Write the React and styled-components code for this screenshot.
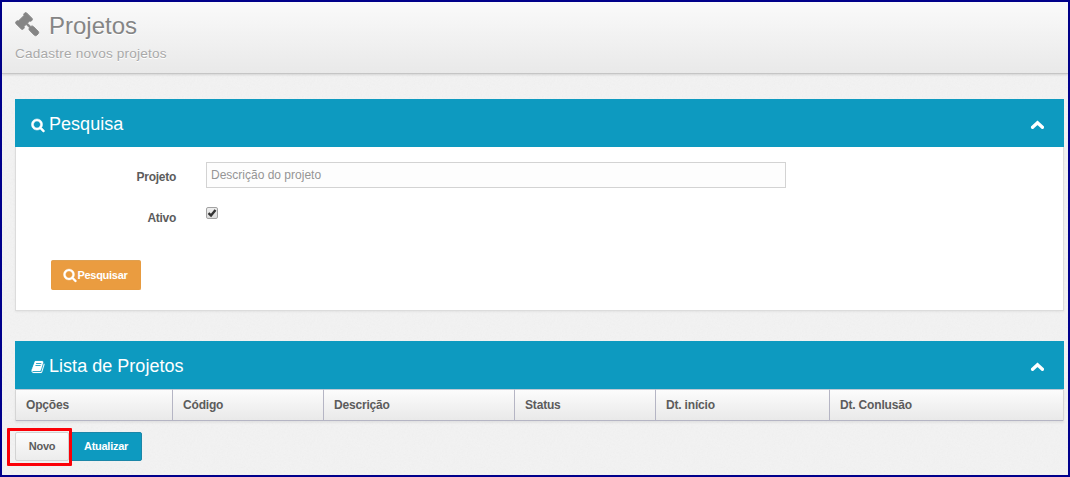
import React, { useState } from "react";
import styled, { createGlobalStyle } from "styled-components";

const GlobalStyle = createGlobalStyle`
  *,
  *::after {
    box-sizing: border-box;
  }

  body {
    margin: 0;
    overflow: hidden;
    font-family: "Liberation Sans", Arial, sans-serif;
    font-size: 12px;
    color: #5c5c5c;
  }
`;

const grain = `url("data:image/svg+xml,%3Csvg xmlns='http://www.w3.org/2000/svg' width='120' height='120'%3E%3Cfilter id='n'%3E%3CfeTurbulence type='fractalNoise' baseFrequency='.6' numOctaves='2' stitchTiles='stitch'/%3E%3CfeColorMatrix type='saturate' values='0'/%3E%3C/filter%3E%3Crect width='120' height='120' filter='url(%23n)' opacity='.08'/%3E%3C/svg%3E")`;

const Page = styled.div`
  display: flex;
  flex-direction: column;
  width: 1070px;
  height: 477px;
  border: 2px solid #00008b;
  background: #f3f3f3 ${grain};
`;

const Header = styled.header`
  height: 72px;
  flex: none;
  padding: 10px 13px 0;
  background: linear-gradient(#fafafa, #e9e9e9);
  border-bottom: 1px solid #c5c5c5;
  box-shadow: 0 1px 2px rgba(0, 0, 0, 0.12);
`;

const Title = styled.h1`
  display: flex;
  align-items: center;
  gap: 10px;
  height: 28px;
  margin: 0;
  font-size: 24px;
  font-weight: normal;
  color: #858585;
  text-shadow: 0 1px 0 #fff;

  svg {
    margin-top: -4px;
  }
`;

const Subtitle = styled.p`
  margin: 6px 0 0;
  font-size: 13.6px;
  line-height: 15px;
  letter-spacing: 0.19px;
  color: #a9a9a9;
  text-shadow: 0 1px 0 #fff;
`;

const Content = styled.main`
  display: flex;
  flex-direction: column;
  padding: 25px 4px 0 13px;
`;

const Panel = styled.section`
  margin-bottom: ${(p) => p.$gap || 0}px;
`;

const PanelHeader = styled.div`
  display: flex;
  align-items: center;
  height: 48px;
  padding: 2px 20px 0 16px;
  background: #0d9ac0;
  color: #fff;

  svg {
    margin-top: 1px;
  }

  h2 {
    flex: 1;
    margin: 0 0 0 4px;
    font-size: 18px;
    font-weight: normal;
    letter-spacing: 0.03px;
  }
`;

const Toggle = styled.button`
  display: flex;
  padding: 0;
  border: 0;
  background: none;
  color: #fff;
`;

const Form = styled.div`
  height: 164px;
  padding: 15px 35px 0;
  background: #fff;
  border: 1px solid #dcdcdc;
  border-top: 0;
  box-shadow: 0 1px 2px rgba(0, 0, 0, 0.06);
`;

const Field = styled.div`
  display: flex;
  align-items: flex-start;
  height: ${(p) => p.$height}px;

  label {
    width: 125px;
    margin-right: 30px;
    padding-top: 8px;
    line-height: 14px;
    text-align: right;
    font-weight: bold;
    letter-spacing: -0.28px;
  }
`;

const TextInput = styled.input`
  width: 580px;
  height: 26px;
  padding: 0 4px;
  border: 1px solid #d3d3d3;
  background: #fdfdfd;
  font-family: inherit;
  font-size: 12px;
  outline: none;

  &::placeholder {
    color: #959595;
  }
`;

const Check = styled.button`
  display: flex;
  align-items: center;
  justify-content: center;
  width: 12px;
  height: 12px;
  margin-top: 4px;
  padding: 0;
  border: 1px solid #a2a2a2;
  border-radius: 2px;
  background: linear-gradient(#eee, #dcdcdc);
`;

const Button = styled.button`
  display: flex;
  align-items: center;
  justify-content: center;
  width: ${(p) => p.$width}px;
  height: 30px;
  padding: 0 0 1px;
  border: 1px solid transparent;
  border-radius: 2px;
  font-family: inherit;
  font-size: 11px;
  font-weight: bold;
  letter-spacing: -0.28px;
  color: #fff;

  svg {
    margin-top: 1px;
  }
`;

const SearchButton = styled(Button)`
  padding-right: 1px;
  background: #ea9c40;
  border-color: #e79b40;
  border-top-color: #dfa051;
`;

const RefreshButton = styled(Button)`
  height: 29px;
  background: #0d9ac0;
  border-color: #1b86a8;
`;

const NewButton = styled(Button)`
  height: 29px;
  background: linear-gradient(#fcfcfc, #ececec);
  border-color: #d3d3d3;
  color: #5c5c5c;
`;

const Table = styled.table`
  width: 1049px;
  height: 32px;
  table-layout: fixed;
  border-collapse: separate;
  border-spacing: 0;
  border-right: 1px solid #d5d5d5;
  border-left: 1px solid #d5d5d5;
  box-shadow: 0 2px 2px rgba(0, 0, 0, 0.06);
`;

const Column = styled.th`
  width: ${(p) => p.$width}px;
  height: 32px;
  padding: 0 10px;
  text-align: left;
  font-size: 12px;
  line-height: 14px;
  letter-spacing: -0.18px;
  background: linear-gradient(#fcfcfc, #e9e9e9);
  border-top: 1px solid #bfc9d4;
  border-bottom: 1px solid #b5b5c4;
  border-right: 1px solid #b5b5c4;

  &:last-child {
    border-right: 0;
  }
`;

const Actions = styled.div`
  display: flex;
  margin-top: 11px;
`;

const Highlighted = styled.div`
  position: relative;
  width: 55px;

  &::after {
    content: "";
    position: absolute;
    z-index: 1;
    top: -4px;
    left: -8px;
    width: 65px;
    height: 38px;
    border: 3px solid #fb0007;
    border-radius: 1px;
    pointer-events: none;
  }
`;

const icons = {
  gavel:
    "M1771 1536q0 53-37 90l-107 108q-39 37-91 37-53 0-90-37l-363-364q-38-36-38-90 0-53 43-96l-256-256-126 126q-14 14-34 14t-34-14q2 2 12.5 12t12.5 13 10 11.5 10 13.5 6 13.5 5.5 16.5 1.5 18q0 38-28 68-3 3-16.5 18t-19 20.5-18.5 16.5-22 15.5-22 9-26 4.5q-40 0-68-28l-408-408q-28-28-28-68 0-13 4.5-26t9-22 15.5-22 16.5-18.5 20.5-19 18-16.5q30-28 68-28 10 0 18 1.5t16.5 5.5 13.5 6 13.5 10 11.5 10 13 12.5 12 12.5q-14-14-14-34t14-34l348-348q14-14 34-14t34 14q-2-2-12.5-12t-12.5-13-10-11.5-10-13.5-6-13.5-5.5-16.5-1.5-18q0-38 28-68 3-3 16.5-18t19-20.5 18.5-16.5 22-15.5 22-9 26-4.5q40 0 68 28l408 408q28 28 28 68 0 13-4.5 26t-9 22-15.5 22-16.5 18.5-20.5 19-18 16.5q-30 28-68 28-10 0-18-1.5t-16.5-5.5-13.5-6-13.5-10-11.5-10-13-12.5-12-12.5q14 14 14 34t-14 34l-126 126 256 256q43-43 96-43 52 0 91 37l363 363q37 39 37 91z",
  search:
    "M1216 832q0-185-131.5-316.5t-316.5-131.5-316.5 131.5-131.5 316.5 131.5 316.5 316.5 131.5 316.5-131.5 131.5-316.5zm512 832q0 52-38 90t-90 38q-54 0-90-38l-343-342q-179 124-399 124-143 0-273.5-55.5t-225-150-150-225-55.5-273.5 55.5-273.5 150-225 225-150 273.5-55.5 273.5 55.5 225 150 150 225 55.5 273.5q0 220-124 399l343 343q37 37 37 90z",
  book: "M1703 478q40 57 18 129l-275 906q-19 64-76.5 107.5t-122.5 43.5h-923q-77 0-148.5-53.5t-99.5-131.5q-24-67-2-127 0-4 3-27t4-37q1-8-3-21.5t-3-19.5q2-11 8-21t16.5-23.5 16.5-23.5q23-38 45-91.5t30-91.5q3-10 .5-30t-.5-28q3-11 17-28t17-23q21-36 42-92t25-90q1-9-2.5-32t.5-28q4-13 22-30.5t22-22.5q19-26 42.5-84.5t27.5-96.5q1-8-3-25.5t-2-26.5q2-8 9-18t18-23 17-21q8-12 16.5-30.5t15-35 16-36 19.5-32 26.5-23.5 36-11.5 47.5 5.5l-1 3q38-9 51-9h761q74 0 114 56t18 130l-274 906q-36 119-71.5 153.5t-128.5 34.5h-869q-27 0-38 15-11 16-1 43 24 70 144 70h923q29 0 56-15.5t35-41.5l300-987q7-22 5-57 38 15 59 43zm-1064 2q-4 13 2 22.5t20 9.5h608q13 0 25.5-9.5t16.5-22.5l21-64q4-13-2-22.5t-20-9.5h-608q-13 0-25.5 9.5t-16.5 22.5zm-83 256q-4 13 2 22.5t20 9.5h608q13 0 25.5-9.5t16.5-22.5l21-64q4-13-2-22.5t-20-9.5h-608q-13 0-25.5 9.5t-16.5 22.5z",
};

const Icon = ({ name, size, weight = 0 }) => (
  <svg
    width={size}
    height={size}
    viewBox="0 0 1792 1792"
    fill="currentColor"
    stroke="currentColor"
    strokeWidth={weight}
    overflow="visible"
  >
    <path d={icons[name]} />
  </svg>
);

const Chevron = () => (
  <svg width="14" height="10" viewBox="0 0 14 10" fill="none">
    <path
      d="M2.6 7.3 7.5 2.8l4.9 4.5"
      stroke="currentColor"
      strokeWidth="3.3"
      strokeLinecap="round"
    />
  </svg>
);

const columns = [
  { name: "Opções", width: 157 },
  { name: "Código", width: 151 },
  { name: "Descrição", width: 191 },
  { name: "Status", width: 141 },
  { name: "Dt. início", width: 174 },
  { name: "Dt. Conlusão", width: 233 },
];

const App = () => {
  const [active, setActive] = useState(true);

  return (
    <Page>
      <GlobalStyle />
      <Header>
        <Title>
          <Icon name="gavel" size={24} weight={70} />
          Projetos
        </Title>
        <Subtitle>Cadastre novos projetos</Subtitle>
      </Header>
      <Content>
        <Panel $gap={30}>
          <PanelHeader>
            <Icon name="search" size={14} weight={70} />
            <h2>Pesquisa</h2>
            <Toggle aria-label="Recolher">
              <Chevron />
            </Toggle>
          </PanelHeader>
          <Form>
            <Field $height={41}>
              <label htmlFor="projeto">Projeto</label>
              <TextInput id="projeto" placeholder="Descrição do projeto" />
            </Field>
            <Field $height={57}>
              <label>Ativo</label>
              <Check
                role="checkbox"
                aria-checked={active}
                aria-label="Ativo"
                onClick={() => setActive(!active)}
              >
                {active && (
                  <svg width="10" height="10" viewBox="0 0 10 10" fill="none">
                    <path d="M1.5 5.2 4 7.5 8.5 2" stroke="#333" strokeWidth="2.4" />
                  </svg>
                )}
              </Check>
            </Field>
            <SearchButton $width={90}>
              <Icon name="search" size={14} weight={40} />
              Pesquisar
            </SearchButton>
          </Form>
        </Panel>
        <Panel>
          <PanelHeader>
            <Icon name="book" size={14} weight={20} />
            <h2>Lista de Projetos</h2>
            <Toggle aria-label="Recolher">
              <Chevron />
            </Toggle>
          </PanelHeader>
          <Table>
            <thead>
              <tr>
                {columns.map((c) => (
                  <Column key={c.name} $width={c.width}>
                    {c.name}
                  </Column>
                ))}
              </tr>
            </thead>
          </Table>
        </Panel>
        <Actions>
          <Highlighted>
            <NewButton $width={54}>Novo</NewButton>
          </Highlighted>
          <RefreshButton $width={72}>Atualizar</RefreshButton>
        </Actions>
      </Content>
    </Page>
  );
};

export default App;
